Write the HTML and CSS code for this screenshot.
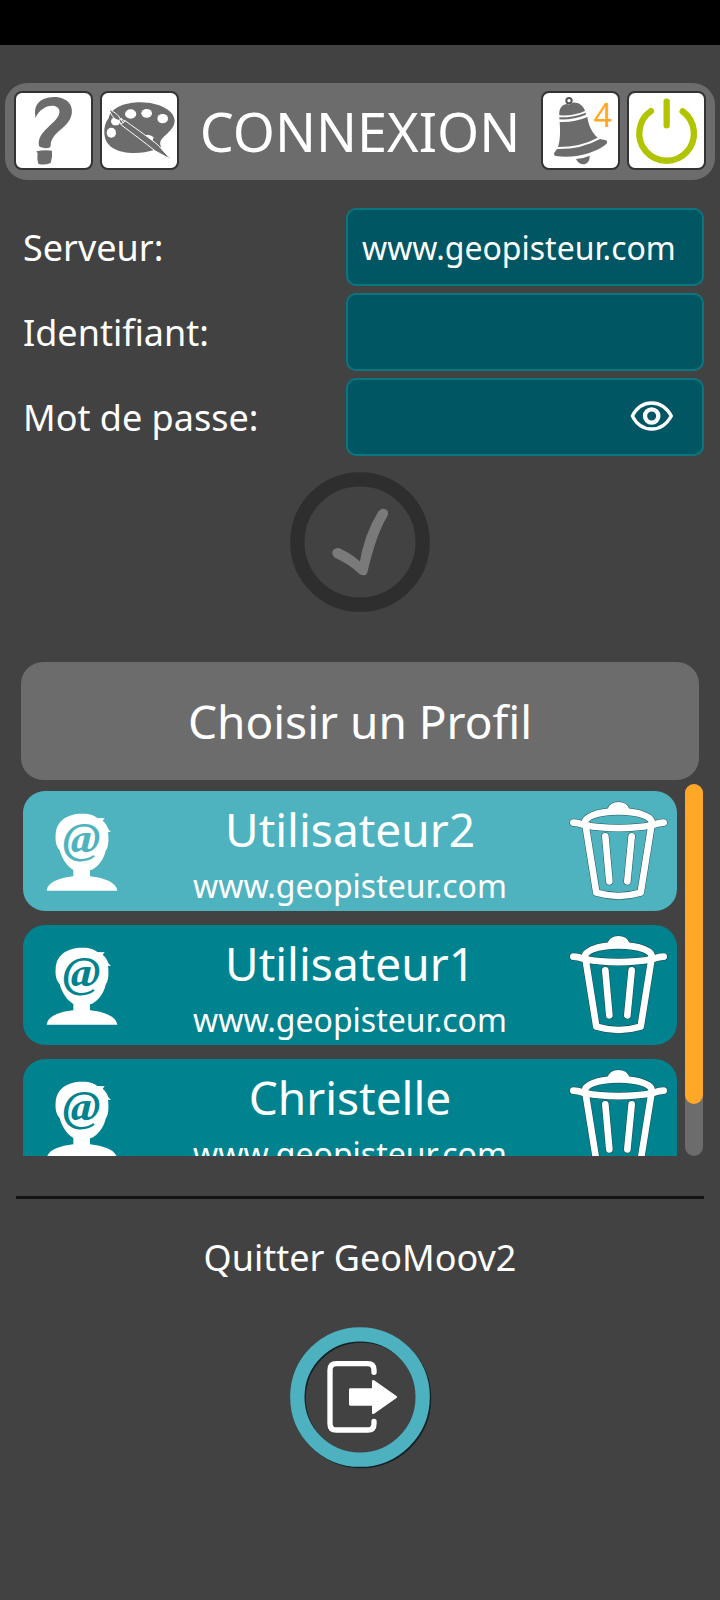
FILE: index.html
```html
<!DOCTYPE html>
<html lang="fr">
<head>
<meta charset="utf-8">
<meta name="viewport" content="width=device-width, initial-scale=1">
<title>Connexion</title>
<link rel="stylesheet" href="styles.css">
</head>
<body>
<svg class="defs" aria-hidden="true">
  <symbol id="person" viewBox="70 423 330 360">
    <path fill="#fff" d="M141 722C143 698 176 684 221 679V660C204 650 187 628 180 600C171 592 166 574 168 554C170 514 200 491 248 491C272 491 286 497 293 504L315 505L309 512C318 520 324 530 326 538L334 546L325 545C327 562 328 590 318 602C312 630 292 655 271 661V679C316 684 350 698 353 722Z"/>
    <text class="at" x="246" y="608" text-anchor="middle">@</text>
  </symbol>
  <symbol id="trash" viewBox="81 63 330 360">
    <g fill="none" stroke-linecap="round" stroke-linejoin="round">
      <g stroke="#173c42" stroke-opacity=".8" stroke-width="23">
        <path d="M100 158C122 159 124 163 137 166C190 177 280 177 334 166C347 163 350 159 371 158"/>
        <path d="M136 161C128 143 170 124 235 124C302 124 342 143 334 161"/>
        <path d="M211 122Q216 106 235 106Q254 106 260 122Z"/>
        <path d="M137 168L169 368Q236 388 302 368L334 168"/>
        <path d="M196 199L208 334M275 199L262 334"/>
      </g>
      <g stroke="#fff" stroke-width="20">
        <path d="M100 158C122 159 124 163 137 166C190 177 280 177 334 166C347 163 350 159 371 158"/>
        <path d="M136 161C128 143 170 124 235 124C302 124 342 143 334 161"/>
        <path fill="#fff" d="M211 122Q216 106 235 106Q254 106 260 122Z"/>
        <path d="M137 168L169 368Q236 388 302 368L334 168"/>
        <path d="M196 199L208 334M275 199L262 334"/>
      </g>
    </g>
  </symbol>
</svg>

<div class="status-bar"></div>

<header class="header">
  <div class="tools">
    <button class="tool" type="button" aria-label="Aide">
      <svg viewBox="48 69 225 225"><path fill="#6c6c6c" d="M107 144C102 120 106 98 131 87C160 75 198 81 211 104C222 126 213 150 194 168C172 188 151 203 152 228L148 233C140 236 123 234 117 228C113 207 124 191 142 174C162 155 182 139 178 121C175 108 159 104 144 109C127 115 112 128 107 144Z"/><path fill="#6c6c6c" d="M109 244Q132 239 156 242Q158 262 152 279Q132 287 115 281Q110 268 113 250Z"/></svg>
    </button>
    <button class="tool" type="button" aria-label="Thème">
      <svg viewBox="306 69 225 225">
        <path fill="#6c6c6c" d="M313 190C312 172 316 156 326 145C332 110 385 96 423 97C475 98 522 119 524 152C524 174 501 190 490 202C481 211 478 218 483 230L460 241C425 252 370 254 337 233C320 222 314 207 313 190Z"/>
        <g fill="#fff"><ellipse cx="392" cy="132" rx="17" ry="14"/><ellipse cx="440" cy="130" rx="16" ry="13"/><ellipse cx="488" cy="146" rx="16" ry="14"/><ellipse cx="334" cy="188" rx="14" ry="15"/><ellipse cx="347" cy="154" rx="14" ry="12"/><path d="M433 196Q448 190 461 202L457 214Z"/></g>
        <path fill="#6c6c6c" stroke="#fff" stroke-width="3" stroke-linejoin="round" d="M327 117C340 126 355 132 360 146L378 154C415 181 450 205 475 226L512 268L466 243C432 216 396 189 364 165L357 151C343 150 334 136 327 117Z"/>
        <path fill="none" stroke="#fff" stroke-width="3" d="M357 151L366 144M363 162L376 153M362 149L371 159"/>
      </svg>
    </button>
  </div>
  <h1 class="title">CONNEXION</h1>
  <div class="tools">
    <button class="tool" type="button" aria-label="Notifications">
      <svg viewBox="69 69 225 225">
        <g fill="#6c6c6c">
          <circle cx="147" cy="92" r="8" fill="none" stroke="#555" stroke-width="6"/>
          <path d="M118 136C116 116 126 104 140 102Q150 106 158 98C174 96 190 106 195 123Q160 139 118 136Z"/>
          <path d="M118 142Q160 143 197 128L198 134Q160 150 118 148Z"/>
          <path d="M119 156Q162 158 202 141C206 168 216 188 233 203Q182 231 114 231C121 210 121 184 119 156Z"/>
          <path d="M111 237Q185 238 240 207L258 211Q264 216 259 222C222 252 160 266 107 258Q100 255 103 248Z"/>
          <path d="M168 267Q190 266 209 257C210 272 202 283 188 283Q175 282 168 267Z"/>
        </g>
      </svg>
      <span class="badge">4</span>
    </button>
    <button class="tool" type="button" aria-label="Éteindre">
      <svg viewBox="327 69 225 225"><path fill="none" stroke="#b1c400" stroke-width="19" stroke-linecap="round" d="M393 123A82 82 0 1 0 488 124M440 95V166"/></svg>
    </button>
  </div>
</header>

<form class="login">
  <div class="fields">
    <label for="server">Serveur:</label>
    <input id="server" type="text" value="www.geopisteur.com">
    <label for="user">Identifiant:</label>
    <input id="user" type="text">
    <label for="password">Mot de passe:</label>
    <div class="password">
      <input id="password" type="password">
      <button class="reveal" type="button" aria-label="Afficher le mot de passe">
        <svg viewBox="900 600 132 96"><g fill="none" stroke="#fff" stroke-width="10"><path stroke-linejoin="round" d="M907 648C920 623 942 609 965 609C988 609 1010 623 1024 648C1010 673 988 687 965 687C942 687 920 673 907 648Z"/><circle cx="965" cy="648" r="20" stroke-width="13"/></g></svg>
      </button>
    </div>
  </div>
  <button class="round" type="submit" aria-label="Valider" disabled>
    <svg viewBox="54 36 420 420"><circle cx="264" cy="246" r="188" fill="none" stroke="#2e2e2e" stroke-width="43"/><path fill="#7a7a7a" stroke="#7a7a7a" stroke-width="14" stroke-linejoin="round" d="M190 274Q196 269 204 273Q245 293 268 318Q283 225 326 157Q334 149 341 157Q343 162 339 167C315 205 298 255 279 337Q274 341 267 337Q238 308 192 287Q185 280 190 274Z"/></svg>
  </button>
</form>

<main class="profiles">
  <h2 class="profiles-title">Choisir un Profil</h2>
  <div class="scroller">
    <ul class="list">
      <li class="card selected">
        <button class="pick" type="button"><svg class="icon"><use href="#person"/></svg><span class="who"><span class="name">Utilisateur2</span><span class="host">www.geopisteur.com</span></span></button>
        <button class="delete" type="button" aria-label="Supprimer Utilisateur2"><svg class="icon"><use href="#trash"/></svg></button>
      </li>
      <li class="card">
        <button class="pick" type="button"><svg class="icon"><use href="#person"/></svg><span class="who"><span class="name">Utilisateur1</span><span class="host">www.geopisteur.com</span></span></button>
        <button class="delete" type="button" aria-label="Supprimer Utilisateur1"><svg class="icon"><use href="#trash"/></svg></button>
      </li>
      <li class="card">
        <button class="pick" type="button"><svg class="icon"><use href="#person"/></svg><span class="who"><span class="name">Christelle</span><span class="host">www.geopisteur.com</span></span></button>
        <button class="delete" type="button" aria-label="Supprimer Christelle"><svg class="icon"><use href="#trash"/></svg></button>
      </li>
    </ul>
    <div class="track"><div class="thumb"></div></div>
  </div>
</main>

<footer class="quit">
  <p class="quit-label" id="quit-label">Quitter GeoMoov2</p>
  <button class="round" type="button" aria-labelledby="quit-label">
    <svg viewBox="54 51 420 420"><circle cx="268" cy="265" r="188" fill="none" stroke="#0f2225" stroke-width="43"/><circle cx="264" cy="261" r="188" fill="none" stroke="#4eb1bf" stroke-width="43"/><path fill="none" stroke="#fff" stroke-width="16" stroke-linecap="round" d="M306 187V180Q306 161 287 161H193Q174 161 174 180V341Q174 360 193 360H287Q306 360 306 341V334"/><path fill="#fff" stroke="#fff" stroke-width="8" stroke-linejoin="round" d="M235 239H304V214L371 261L304 308V283H235Z"/></svg>
  </button>
</footer>
</body>
</html>
```
FILE: styles.css
```css
* {
  box-sizing: border-box;
}

body {
  margin: 0;
  min-height: 100vh;
  background: #424242;
  color: #fff;
  font-family: "Noto Sans", "Open Sans", sans-serif;
}

button {
  padding: 0;
  border: 0;
  background: none;
  color: inherit;
  font: inherit;
  cursor: pointer;
}

svg {
  display: block;
}

.defs {
  position: absolute;
  width: 0;
  height: 0;
}

.status-bar {
  height: 45px;
  background: #000;
}

.header {
  display: flex;
  align-items: center;
  justify-content: space-between;
  margin: 38px 5px 0;
  padding: 8px 9px 10px;
  border-radius: 22px;
  background: #6c6c6c;
}

.tools {
  display: flex;
  gap: 7px;
}

.tool {
  position: relative;
  width: 79px;
  height: 79px;
  border: 2px solid #333;
  border-radius: 8px;
  background: #fff;
}

.tool svg {
  width: 100%;
  height: 100%;
}

.badge {
  position: absolute;
  top: 0;
  right: 6px;
  color: #ffa726;
  font-size: 32px;
  line-height: 44px;
}

.title {
  margin: 0;
  font-size: 54px;
  font-weight: 400;
  line-height: 78px;
}

.login {
  padding: 28px 16px 0;
}

.fields {
  display: grid;
  grid-template-columns: 323fr 358fr;
  gap: 7px 0;
  align-items: center;
  padding-left: 7px;
  font-size: 36px;
}

.fields input {
  display: block;
  width: 100%;
  height: 78px;
  padding: 0 14px;
  border: 2px solid #0b7680;
  border-radius: 10px;
  background: #005662;
  color: #fff;
  font: 32px "Noto Sans", "Open Sans", sans-serif;
}

.password {
  position: relative;
}

.reveal {
  position: absolute;
  top: 22px;
  right: 30px;
}

.reveal svg {
  width: 44px;
  height: 32px;
}

.round {
  display: block;
  width: 140px;
  height: 140px;
  margin: 0 auto;
  border-radius: 50%;
}

.round svg {
  width: 100%;
  height: 100%;
  overflow: visible;
}

.login .round {
  margin-top: 16px;
}

.profiles {
  padding: 50px 16px 0 21px;
}

.profiles-title {
  margin: 0 5px 0 0;
  border-radius: 22px;
  background: #6c6c6c;
  font-size: 46px;
  font-weight: 400;
  line-height: 118px;
  text-align: center;
}

.scroller {
  display: flex;
  gap: 8px;
  height: 372px;
  margin: 4px 1px 0 2px;
}

.list {
  flex: 1;
  margin: 0;
  padding: 7px 0 0;
  overflow: hidden;
  list-style: none;
}

.card {
  display: grid;
  grid-template-columns: 1fr 110px;
  height: 120px;
  margin-bottom: 14px;
  border-radius: 22px;
  background: #00838f;
}

.selected {
  --at: #4fb3bf;
  background: #4fb3bf;
}

.icon {
  width: 110px;
  height: 120px;
}

.at {
  fill: var(--at, #00838f);
  font: italic bold 136px "Liberation Serif", serif;
}

.pick {
  display: grid;
  grid-template-columns: 110px 1fr;
}

.who {
  display: flex;
  flex-direction: column;
  gap: 4px;
  padding-top: 7px;
  text-align: center;
}

.name {
  font-size: 46px;
  line-height: 62px;
}

.host {
  font-size: 32px;
  line-height: 44px;
}

.track {
  width: 18px;
  border-radius: 9px;
  background: #6c6c6c;
}

.thumb {
  height: 86%;
  border-radius: 9px;
  background: #ffa726;
}

.quit {
  margin: 40px 16px 0;
  padding-top: 34px;
  border-top: 3px solid #141414;
}

.quit-label {
  margin: 0 0 44px;
  font-size: 36px;
  line-height: 50px;
  text-align: center;
}
```
